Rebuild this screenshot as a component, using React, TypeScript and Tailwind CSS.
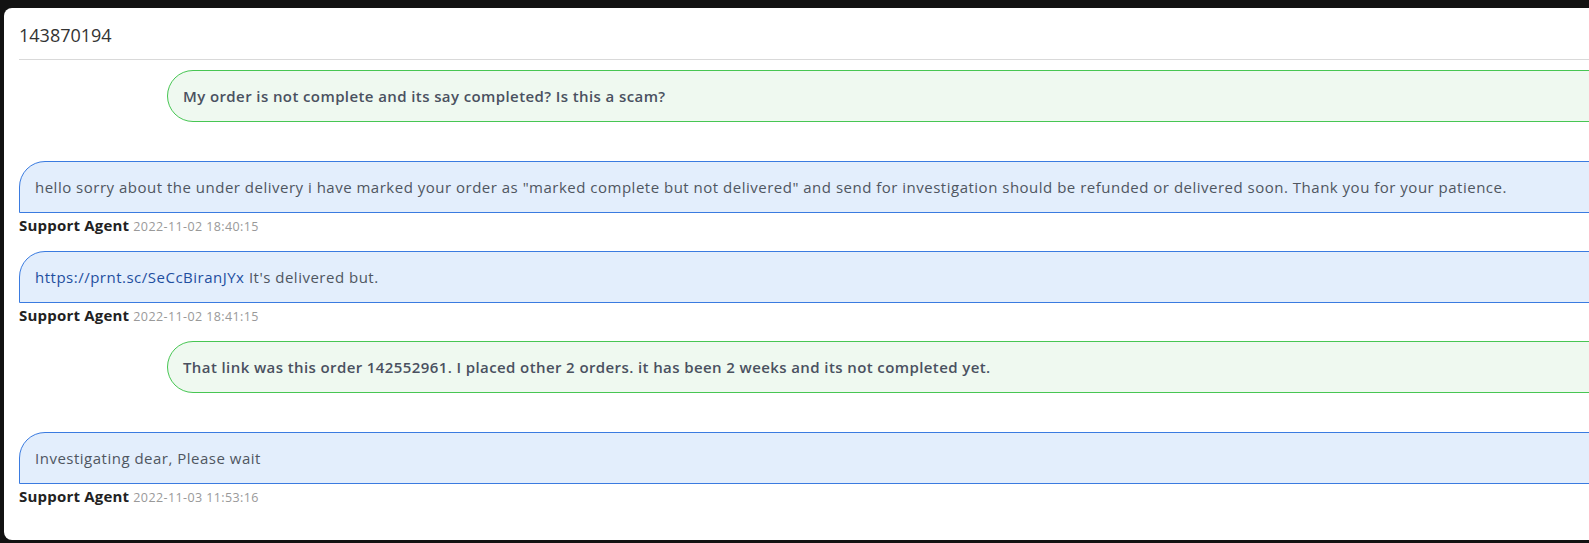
import React from "react";

const font = { fontFamily: '"Open Sans", "Liberation Sans", sans-serif' };

function CustomerBubble({ text }: { text: string }) {
  return (
    <div className="ml-[148px] mb-[39px] h-[52px] rounded-l-[26px] border border-[#47c653] bg-[#eff9f0] px-[15px] py-[15px] text-[15px] leading-[20px] tracking-[0.4px] font-semibold text-[#4a5160]">
      {text}
    </div>
  );
}

function AgentBubble({ children, time }: { children: React.ReactNode; time: string }) {
  return (
    <div className="mb-[16px]">
      <div className="h-[52px] rounded-tl-[26px] border border-[#3a7be0] bg-[#e3eefc] px-[15px] py-[15px] text-[15px] leading-[20px] tracking-[0.5px] text-[#4f5661]">
        {children}
      </div>
      <div className="mt-[2px] flex h-[20px] items-baseline gap-[4px] overflow-hidden">
        <span className="text-[15px] leading-[20px] tracking-[0.2px] font-bold text-[#222]">Support Agent</span>
        <span className="text-[12.5px] leading-[20px] tracking-[0.4px] text-[#999]">{time}</span>
      </div>
    </div>
  );
}

export default function App() {
  return (
    <div className="h-[543px] w-full overflow-hidden bg-[#121212] pl-[4px] pt-[8px]" style={font}>
      <div className="h-[532px] w-[1640px] rounded-l-lg bg-white pl-[15px] pt-[13px]">
        <div className="border-b border-[#d9d9d9] pb-[10px] text-[18px] leading-[28px] text-[#333]">
          143870194
        </div>
        <div className="pt-[10px]">
          <CustomerBubble text="My order is not complete and its say completed? Is this a scam?" />
          <AgentBubble time="2022-11-02 18:40:15">
            hello sorry about the under delivery i have marked your order as "marked complete but not delivered" and send for investigation should be refunded or delivered soon. Thank you for your patience.
          </AgentBubble>
          <AgentBubble time="2022-11-02 18:41:15">
            <a className="text-[#1f4fa0]">https://prnt.sc/SeCcBiranJYx</a> It's delivered but.
          </AgentBubble>
          <CustomerBubble text="That link was this order 142552961. I placed other 2 orders. it has been 2 weeks and its not completed yet." />
          <AgentBubble time="2022-11-03 11:53:16">Investigating dear, Please wait</AgentBubble>
        </div>
      </div>
    </div>
  );
}
